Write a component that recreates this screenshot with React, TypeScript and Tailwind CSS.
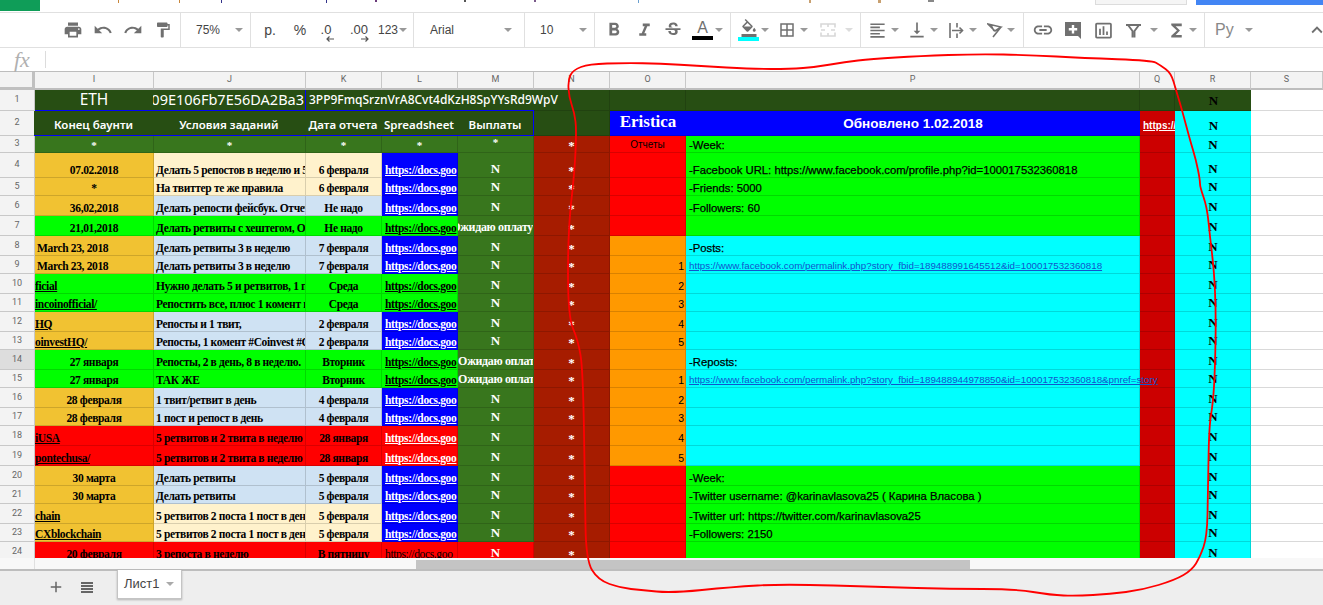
import React from "react";
import {
  MdPrint, MdUndo, MdRedo, MdFormatPaint, MdFormatBold, MdFormatItalic, MdStrikethroughS,
  MdFormatColorFill, MdBorderAll, MdFormatAlignLeft, MdVerticalAlignBottom, MdLink,
  MdInsertChartOutlined, MdFunctions, MdExpandLess, MdAdd,
} from "react-icons/md";

const Caret = ({ cls = "" }: { cls?: string }) => (
  <span className={`inline-block shrink-0 w-0 h-0 border-x-[4px] border-x-transparent border-t-[4px] border-t-[#999] ${cls}`} />
);

const Btn = ({ w, children }: { w: string; children: React.ReactNode }) => (
  <div className={`${w} h-full flex items-center justify-center shrink-0`}>{children}</div>
);

const Group = ({ w, children }: { w: string; children: React.ReactNode }) => (
  <div className={`${w} h-full flex items-center shrink-0 border-r border-[#e0e0e0]`}>{children}</div>
);

const I = ({ icon: Icon, size = 20 }: { icon: any; size?: number }) => <Icon size={size} color="#707070" />;

const ArrowL = () => (
  <svg className="absolute left-[5px] top-[13px]" width="8" height="6" viewBox="0 0 8 6" fill="none" stroke="#555" strokeWidth="1.2"><path d="M8 3H1M3.500 .5L1 3l2.500 2.500" /></svg>
);
const ArrowR = () => (
  <svg className="absolute left-[11px] top-[13px]" width="8" height="6" viewBox="0 0 8 6" fill="none" stroke="#555" strokeWidth="1.2"><path d="M0 3h7M4.500 .5L7 3 4.500 5.500" /></svg>
);

const Toolbar = () => (
  <div className="h-[36px] flex border-y border-[#e0e0e0] bg-white font-['Liberation_Sans',sans-serif] text-[12px] text-[#444] overflow-hidden">
    <div className="w-[58px] shrink-0" />
    <Group w="w-[123px]">
      <Btn w="w-[30px]"><I icon={MdPrint} /></Btn>
      <Btn w="w-[30px]"><I icon={MdUndo} /></Btn>
      <Btn w="w-[30px]"><I icon={MdRedo} /></Btn>
      <Btn w="w-[30px]"><I icon={MdFormatPaint} size={18} /></Btn>
    </Group>
    <Group w="w-[70px]">
      <span className="ml-[15px] w-[39px]">75%</span>
      <Caret />
    </Group>
    <Group w="w-[163px]">
      <Btn w="w-[38px]"><span className="text-[14px]">р.</span></Btn>
      <Btn w="w-[22px]"><span className="text-[14px]">%</span></Btn>
      <Btn w="w-[30px]">
        <span className="relative text-[13px] leading-none pb-[2px]">.0<ArrowL /></span>
      </Btn>
      <Btn w="w-[36px]">
        <span className="relative text-[13px] leading-none pb-[2px]">.00<ArrowR /></span>
      </Btn>
      <div className="flex items-center gap-[1px] ml-[1px]"><span className="text-[12px]">123</span><Caret /></div>
    </Group>
    <Group w="w-[111px]">
      <span className="ml-[16px] w-[74px] text-[12px]">Arial</span>
      <Caret />
    </Group>
    <Group w="w-[70px]">
      <span className="ml-[15px] w-[39px] text-[12px]">10</span>
      <Caret />
    </Group>
    <Group w="w-[136px]">
      <Btn w="ml-[8px] w-[22px]"><I icon={MdFormatBold} size={22} /></Btn>
      <Btn w="ml-[8px] w-[22px]"><I icon={MdFormatItalic} size={21} /></Btn>
      <Btn w="ml-[8px] w-[20px]"><I icon={MdStrikethroughS} size={20} /></Btn>
      <div className="flex items-center ml-[9px]">
        <div className="flex flex-col items-center w-[21px]">
          <span className="text-[16px] leading-[16px] text-[#707070]">A</span>
          <span className="w-[21px] h-[4px] bg-black" />
        </div>
        <Caret cls="ml-[2px]" />
      </div>
    </Group>
    <Group w="w-[130px]">
      <div className="flex items-center ml-[7px]">
        <div className="flex flex-col items-center w-[21px]">
          <MdFormatColorFill size={18} color="#707070" />
          <span className="w-[21px] h-[4px] bg-[#00ffff]" />
        </div>
        <Caret cls="ml-[2px]" />
      </div>
      <Btn w="ml-[9px] w-[18px]"><MdBorderAll size={18} color="#707070" /></Btn>
      <Caret cls="ml-[4px]" />
      <Btn w="ml-[12px] w-[16px]">
        <svg width="16" height="14" viewBox="0 0 16 14" fill="none" stroke="#d8d8d8" strokeWidth="1.600">
          <path d="M1 4.500V1h14v3.500M1 9.500V13h14V9.500M1 7h4M11 7h4M8 1v3M8 10v3" />
        </svg>
      </Btn>
      <Caret cls="ml-[9px] border-t-[#dcdcdc]" />
    </Group>
    <Group w="w-[163px]">
      <Btn w="ml-[5px] w-[22px]"><I icon={MdFormatAlignLeft} size={19} /></Btn>
      <Caret cls="ml-[3px]" />
      <Btn w="ml-[7px] w-[22px]"><I icon={MdVerticalAlignBottom} size={20} /></Btn>
      <Caret cls="ml-[2px]" />
      <Btn w="ml-[8px] w-[20px]">
        <svg width="15" height="15" viewBox="0 0 15 15" fill="none" stroke="#707070" strokeWidth="1.600">
          <path d="M1 0v15M8 0v4.500M8 10.500V15M3 7.500h10" />
          <path d="M10.500 4.500l3 3-3 3" />
        </svg>
      </Btn>
      <Caret cls="ml-[3px]" />
      <Btn w="ml-[10px] w-[16px]">
        <svg width="16" height="16" viewBox="0 0 16 16" fill="none" stroke="#707070" strokeWidth="1.600">
          <path d="M1 2l13 3-6 4zM14 5L6 15M4 3l3 6" />
        </svg>
      </Btn>
      <Caret cls="ml-[4px]" />
    </Group>
    <Group w="w-[181px]">
      <Btn w="ml-[8px] w-[22px]"><I icon={MdLink} size={22} /></Btn>
      <Btn w="ml-[11px] w-[16px]">
        <svg width="16" height="17" viewBox="0 0 16 17">
          <path fill="#707070" d="M0 0h16v17l-3-3H0z" />
          <path fill="#fff" d="M6.800 3h2.400v3h3v2.400h-3v3H6.800v-3h-3V6h3z" />
        </svg>
      </Btn>
      <Btn w="ml-[11px] w-[22px]"><I icon={MdInsertChartOutlined} size={21} /></Btn>
      <Btn w="ml-[12px] w-[15px]">
        <svg width="15" height="15" viewBox="0 0 15 15" fill="none" stroke="#707070" strokeWidth="1.900">
          <path d="M0 2h15M2 2l4.500 6v6.500M13 2L8.500 8v6.500" />
        </svg>
      </Btn>
      <Caret cls="ml-[9px]" />
      <Btn w="ml-[8px] w-[21px]"><I icon={MdFunctions} size={21} /></Btn>
      <Caret cls="ml-[2px]" />
    </Group>
    <div className="flex items-center h-full">
      <span className="ml-[10px] w-[30px] text-[16px] text-[#888]">Ру</span>
      <Caret />
      <span className="ml-[53px]"><I icon={MdExpandLess} size={22} /></span>
    </div>
  </div>
);

const TitleStrip = () => (
  <div className="h-[12px] bg-white flex items-start overflow-hidden">
    <div className="w-[40px] h-[11px] bg-[#0f9d58]" />
    <span className="ml-[78px] w-[1px] h-[3px] bg-[#c8873c]" />
    <span className="ml-[60px] w-[1px] h-[3px] bg-[#c8873c]" />
    <span className="ml-[41px] w-[1px] h-[3px] bg-[#33338a]" />
    <span className="ml-[104px] w-[1px] h-[3px] bg-[#33338a]" />
    <span className="ml-[48px] w-[2px] h-[2px] bg-[#6a3a7a]" />
    <span className="ml-[87px] w-[2px] h-[2px] bg-[#555]" />
    <span className="ml-[68px] w-[2px] h-[2px] bg-[#7a5a8a]" />
    <span className="ml-[102px] w-[1px] h-[3px] bg-[#6aa0d0]" />
    <span className="ml-[170px] w-[2px] h-[3px] bg-[#c8a070]" />
    <span className="ml-[67px] w-[3px] h-[3px] bg-[#c8a070]" />
    <span className="ml-[47px] w-[6px] h-[2px] bg-[#888]" />
    <div className="ml-[161px] w-[92px] h-[5px] bg-[#f5f5f5] border border-t-0 border-[#dcdcdc]" />
    <div className="ml-[9px] w-[128px] h-[5px] bg-[#4285f4]" />
  </div>
);

const FormulaBar = () => (
  <div className="h-[24px] bg-white flex items-center border-b border-[#bdbdbd]">
    <span className="ml-[14px] w-[31px] font-['Liberation_Serif',serif] italic text-[22px] leading-none text-[#b0b0b0]">fx</span>
    <span className="w-px h-[17px] bg-[#dcdcdc]" />
  </div>
);

const columns = ["I", "J", "K", "L", "M", "N", "O", "P", "Q", "R", "S"];

const DG = "bg-[#274e13]";
const G = "bg-[#38761d]";
const Y = "bg-[#f1c232]";
const LY = "bg-[#fff2cc]";
const LB = "bg-[#cfe2f3]";
const LIME = "bg-[#00ff00]";
const BL = "bg-[#0000ff]";
const RD = "bg-[#ff0000]";

type Row = {
  n: number;
  i: string;
  ic: string;
  mode?: "c" | "l" | "u";
  j: string;
  jc: string;
  k: string;
  kc: string;
  lc: string;
  link: string;
  m?: string;
  mAlign?: string;
  mc?: string;
};

const WK = "text-black";
const rows: Row[] = [
  { n: 4, i: "07.02.2018", ic: Y, j: "Делать 5 репостов в неделю и 5", jc: LY, k: "6 февраля", kc: LY, lc: BL, link: "text-white" },
  { n: 5, i: "*", ic: Y, j: "На твиттер те же правила", jc: LY, k: "6 февраля", kc: LY, lc: BL, link: "text-white" },
  { n: 6, i: "36,02,2018", ic: Y, j: "Делать репости фейсбук. Отчет", jc: LB, k: "Не надо", kc: LB, lc: BL, link: "text-white" },
  { n: 7, i: "21,01,2018", ic: LIME, j: "Делать ретвиты с хештегом, Отчет", jc: LIME, k: "Не надо", kc: LIME, lc: LIME, link: WK, m: "Ожидаю оплату", mAlign: "justify-end" },
  { n: 8, i: "March 23, 2018", ic: Y, mode: "l", j: "Делать ретвиты 3 в неделю", jc: LB, k: "7 февраля", kc: LB, lc: BL, link: "text-white" },
  { n: 9, i: "March 23, 2018", ic: Y, mode: "l", j: "Делать ретвиты 3 в неделю", jc: LB, k: "7 февраля", kc: LB, lc: BL, link: "text-white" },
  { n: 10, i: "ficial", ic: LIME, mode: "u", j: "Нужно делать 5  и ретвитов, 1 пост", jc: LIME, k: "Среда", kc: LIME, lc: LIME, link: WK },
  { n: 11, i: "incoinofficial/", ic: LIME, mode: "u", j: "Репостить все, плюс 1 комент и", jc: LIME, k: "Среда", kc: LIME, lc: LIME, link: WK },
  { n: 12, i: "HQ", ic: Y, mode: "u", j: "Репосты и 1 твит,", jc: LB, k: "2 февраля", kc: LB, lc: BL, link: "text-white" },
  { n: 13, i: "oinvestHQ/", ic: Y, mode: "u", j: "Репосты,  1 комент #Coinvest #C", jc: LB, k: "2 февраля", kc: LB, lc: BL, link: "text-white" },
  { n: 14, i: "27 января", ic: LIME, j: "Репосты, 2 в день, 8 в неделю.", jc: LIME, k: "Вторник", kc: LIME, lc: LIME, link: WK, m: "Ожидаю оплату", mAlign: "justify-start" },
  { n: 15, i: "27 января", ic: LIME, j: "ТАК ЖЕ", jc: LIME, k: "Вторник", kc: LIME, lc: LIME, link: WK, m: "Ожидаю оплату", mAlign: "justify-start" },
  { n: 16, i: "28 февраля", ic: Y, j: "1 твит/ретвит в день", jc: LB, k: "4 февраля", kc: LB, lc: BL, link: "text-white" },
  { n: 17, i: "28 февраля", ic: Y, j: "1 пост и репост в день", jc: LB, k: "4 февраля", kc: LB, lc: BL, link: "text-white" },
  { n: 18, i: "iUSA", ic: RD, mode: "u", j: "5 ретвитов и 2 твита в неделю", jc: RD, k: "28 января", kc: RD, lc: RD, link: "text-white" },
  { n: 19, i: "pontechusa/", ic: RD, mode: "u", j: "5 ретвитов и 2 твита в неделю", jc: RD, k: "28 января", kc: RD, lc: RD, link: "text-white" },
  { n: 20, i: "30 марта", ic: Y, j: "Делать ретвиты", jc: LB, k: "5 февраля", kc: LB, lc: BL, link: "text-white" },
  { n: 21, i: "30 марта", ic: Y, j: "Делать ретвиты", jc: LB, k: "5 февраля", kc: LB, lc: BL, link: "text-white" },
  { n: 22, i: "chain", ic: Y, mode: "u", j: "5 ретвитов 2 поста 1 пост в день", jc: LY, k: "5 февраля", kc: LY, lc: BL, link: "text-white" },
  { n: 23, i: "CXblockchain", ic: Y, mode: "u", j: "5 ретвитов 2 поста 1 пост в день", jc: LY, k: "5 февраля", kc: LY, lc: BL, link: "text-white" },
  { n: 24, i: "20 февраля", ic: RD, j: "3 репоста в неделю", jc: RD, k: "В пятницу", kc: RD, lc: RD, link: "text-black font-normal", mc: RD },
];

const pCells: Record<number, { t?: string; link?: boolean }> = {
  4: { t: "-Facebook URL: https://www.facebook.com/profile.php?id=100017532360818" },
  5: { t: "-Friends: 5000" },
  6: { t: "-Followers: 60" },
  8: { t: "-Posts:" },
  9: { t: "https://www.facebook.com/permalink.php?story_fbid=189488991645512&id=100017532360818", link: true },
  14: { t: "-Reposts:" },
  15: { t: "https://www.facebook.com/permalink.php?story_fbid=189488944978850&id=100017532360818&pnref=story", link: true },
  20: { t: "-Week:" },
  21: { t: "-Twitter username: @karinavlasova25 ( Карина Власова )" },
  22: { t: "-Twitter url: https://twitter.com/karinavlasova25" },
  23: { t: "-Followers: 2150" },
};
const oNums: Record<number, string> = { 9: "1", 10: "2", 11: "3", 12: "4", 13: "5", 15: "1", 16: "2", 17: "3", 18: "4", 19: "5" };

const line = "border-r border-b border-black/15";
const SER = "font-['Liberation_Serif',serif] font-bold text-[11.5px] tracking-[-0.35px] leading-[14px] text-black";
const SANS = "font-['Liberation_Sans',sans-serif] text-[11.3px] leading-[14px] text-black [-webkit-text-stroke:0.25px_black]";
const COMIC = "font-['Noto_Sans',sans-serif] text-white whitespace-nowrap";

const Cell = ({ className = "", children }: { className?: string; children?: React.ReactNode }) => (
  <div className={`${line} flex items-end min-w-0 overflow-hidden whitespace-nowrap ${className}`}>{children}</div>
);

const Nn = ({ dark }: { dark?: boolean }) => (
  <span className={`font-['Liberation_Serif',serif] font-bold text-[13px] leading-[15px] ${dark ? "text-black pl-[1px]" : "text-white"}`}>N</span>
);

const Star = ({ sm }: { sm?: boolean }) => (
  <span className={`font-['Liberation_Serif',serif] font-bold text-white ${sm ? "text-[11px]" : "text-[13px]"} leading-[13px]`}>*</span>
);

const RowHead = ({ n }: { n: number }) => (
  <div className={`${n === 14 ? "bg-[#dddddd]" : "bg-[#f3f3f3]"} border-r border-b border-[#c8c8c8] flex items-center justify-center font-['Roboto',sans-serif] text-[9px] text-[#666]`}>{n}</div>
);

const Sheet = () => (
  <div className="h-[486px] overflow-hidden bg-white">
    <div className="grid grid-cols-[35px_119px_152px_76px_76px_76px_76px_76px_454px_35px_76px_72px] grid-rows-[18px_21px_25px_17px_25px_18px_20px_20px_20px_18px_20px_18px_20px_18px_20px_18px_20px_18px_20px_20px_20px_18px_20px_18px_20px]">
      {/* column header */}
      <div className="bg-[#f3f3f3] border-r-[3px] border-b-[3px] border-[#c0c0c0]" />
      {columns.map((c) => (
        <div key={c} className="bg-[#f3f3f3] border-r border-b-2 border-b-[#bdbdbd] border-r-[#c8c8c8] flex items-center justify-center font-['Roboto',sans-serif] text-[9px] text-[#666]">{c}</div>
      ))}

      {/* row 1 */}
      <RowHead n={1} />
      <div className={`${DG} border-r border-b border-r-black/15 border-b-[#0000ff] flex items-center justify-center ${COMIC} text-[15.5px]`}>ETH</div>
      <div className={`${DG} border-r border-b border-[#0000ff] flex items-center justify-end overflow-hidden ${COMIC} text-[14.5px] pr-[1px] -ml-px`}>09E106Fb7E56DA2Ba3</div>
      <div className={`${DG} border-b border-[#0000ff] flex items-center pl-[3px] ${COMIC} text-[12px] font-medium z-10`}>3PP9FmqSrznVrA8Cvt4dKzH8SpYYsRd9WpV</div>
      <div className={`${DG} border-b border-[#0000ff]`} />
      <div className={`${DG} border-b border-[#0000ff]`} />
      <div className={`${DG} ${line}`} />
      <div className={`${DG} ${line}`} />
      <div className={`${DG} ${line}`} />
      <div className={`${DG} ${line}`} />
      <div className={`${DG} flex items-center justify-center border-b border-black/15`}><Nn dark /></div>
      <div className="border-b border-[#d9d9d9]" />

      {/* row 2 */}
      <RowHead n={2} />
      {["Конец баунти", "Условия заданий", "Дата отчета", "Spreadsheet", "Выплаты"].map((t) => (
        <div key={t} className={`${DG} border-r border-b border-[#0000ff] -ml-px flex items-end justify-center pb-[2px] ${COMIC} text-[11.5px] font-semibold`}>{t}</div>
      ))}
      <div className={`${DG} ${line}`} />
      <div className={`${BL} border-b border-black/15 flex items-center justify-center font-['Liberation_Serif',serif] font-bold text-white text-[17px] pb-[2px]`}>Eristica</div>
      <div className={`${BL} border-b border-black/15 flex items-end justify-center pb-[1px] font-['Liberation_Sans',sans-serif] font-bold text-white text-[13.5px]`}>Обновлено 1.02.2018</div>
      <div className="bg-[#cc0000] border-b border-black/15 flex items-end overflow-hidden pl-[3px] pb-[2px] font-['Liberation_Sans',sans-serif] font-bold text-white text-[10px] underline">https://</div>
      <div className="bg-[#00ffff] flex items-end justify-center pb-[2px] border-b border-black/15"><Nn dark /></div>
      <div className="border-b border-[#d9d9d9]" />

      {/* row 3 */}
      <RowHead n={3} />
      {["I", "J", "K", "L"].map((c) => (
        <div key={c} className={`${G} ${line} flex items-end justify-center`}><Star sm /></div>
      ))}
      <div className={`${G} ${line} flex items-end justify-center pb-[3px]`}><Star sm /></div>
      <div className={`bg-[#a61c00] ${line} flex items-end justify-center`}><Star /></div>
      <div className={`${RD} ${line} flex items-end justify-center font-['Liberation_Sans',sans-serif] text-[10px] leading-[14px] text-black`}>Отчеты</div>
      <div className={`${LIME} ${line} flex items-end pl-[3px] ${SANS}`}>-Week:</div>
      <div className={`bg-[#cc0000] ${line}`} />
      <div className={`bg-[#00ffff] ${line} flex items-center justify-center`}><Nn dark /></div>
      <div className="border-b border-[#d9d9d9]" />

      {rows.map((r) => {
        const tinted = r.n >= 8 && r.n <= 19;
        const p = pCells[r.n];
        return (
          <React.Fragment key={r.n}>
            <RowHead n={r.n} />
            <Cell className={`${r.ic} ${SER} ${r.mode === "l" ? "pl-[2px]" : r.mode === "u" ? "underline" : "justify-center"}`}>{r.i}</Cell>
            <Cell className={`${r.jc} ${SER} pl-[2px]`}>{r.j}</Cell>
            <Cell className={`${r.kc} ${SER} justify-center`}>{r.k}</Cell>
            <Cell className={`${r.lc} ${SER} pl-[3px]`}><span className={`underline ${r.link}`}>https://docs.goo</span></Cell>
            <Cell className={`${r.mc ?? G} ${r.mAlign ?? "justify-center"} pb-[1px]`}>
              {r.m ? <span className="font-['Liberation_Serif',serif] font-bold text-white text-[12px] tracking-[-0.35px] leading-[14px]">{r.m}</span> : <Nn />}
            </Cell>
            <div className={`bg-[#a61c00] ${line} flex items-end justify-center`}><Star /></div>
            <Cell className={`${tinted ? "bg-[#ff9900]" : RD} font-['Liberation_Sans',sans-serif] text-[10.5px] leading-[14px] text-black justify-end pr-[1px]`}>{oNums[r.n]}</Cell>
            <div className={`${tinted ? "bg-[#00ffff]" : LIME} ${line} flex items-end pl-[3px] whitespace-nowrap ${SANS} ${p?.link ? "z-10" : ""}`}>
              {p?.link ? <span className="underline text-[#1155cc] text-[9.75px] [-webkit-text-stroke:0]">{p.t}</span> : p?.t}
            </div>
            <div className={`bg-[#cc0000] ${line}`} />
            <div className={`bg-[#00ffff] ${line} flex items-end justify-center pb-[1px]`}><Nn dark /></div>
            <div className="border-b border-[#d9d9d9]" />
          </React.Fragment>
        );
      })}
    </div>
  </div>
);

const ScrollBar = () => (
  <div className="h-[13px] bg-[#f8f8f8] flex border-b-2 border-[#bdbdbd]">
    <div className="w-[35px] h-full border-r border-[#e0e0e0]" />
    <div className="ml-[381px] w-[554px] h-[9px] mt-[2px] bg-[#c4c4c4]" />
  </div>
);

const Tabs = () => (
  <div className="h-[34px] bg-[#eeeeee] flex items-start">
    <div className="w-[47px]" />
    <div className="h-[32px] flex items-center"><MdAdd size={18} color="#666" /></div>
    <div className="w-[16px]" />
    <div className="h-[32px] flex items-center">
      <svg width="12" height="11" viewBox="0 0 12 11" fill="#666"><path d="M0 0h12v2H0zM0 3h12v2H0zM0 6h12v2H0zM0 9h12v2H0z" /></svg>
    </div>
    <div className="w-[24px]" />
    <div className="w-[65px] h-[29px] bg-white border border-t-0 border-[#c4c4c4] shadow-[0_1px_2px_rgba(0,0,0,0.25)] -mt-px flex items-center pl-[6px] font-['Liberation_Sans',sans-serif] text-[13px] text-[#444]">
      <span className="w-[42px]">Лист1</span>
      <Caret cls="border-t-[#aaa]" />
    </div>
  </div>
);

const curve: [number, number][] = [
  [568, 80], [573, 70], [589, 64], [625, 63], [660, 63.5], [700, 66], [753, 69], [790, 69], [816, 67], [845, 62],
  [871, 59], [920, 56], [977, 54], [1030, 55], [1083, 58], [1152, 60.5], [1160, 65], [1171, 73], [1176, 90], [1182, 110],
  [1190, 140], [1196, 160], [1200, 180], [1200, 187], [1207, 207], [1210, 237], [1214, 270], [1216, 313], [1215, 370],
  [1213, 403], [1209, 427], [1208, 493], [1207, 537], [1200, 557], [1192, 570], [1175, 580], [1142, 590], [1110, 594],
  [1076, 596], [1051, 595], [1015, 589], [950, 589], [884, 587], [783, 584], [732, 587], [672, 593], [641, 590],
  [621, 588], [598, 580], [586, 560], [585, 493], [583, 370], [578, 340], [568, 317], [568, 230], [574.5, 173],
  [576.5, 130], [574.5, 113], [569, 97],
];
const curvePath = () => {
  const mid = (a: [number, number], b: [number, number]) => `${(a[0] + b[0]) / 2} ${(a[1] + b[1]) / 2}`;
  const n = curve.length;
  let d = `M${mid(curve[n - 1], curve[0])}`;
  for (let i = 0; i < n; i++) d += ` Q${curve[i][0]} ${curve[i][1]} ${mid(curve[i], curve[(i + 1) % n])}`;
  return d + "Z";
};

export default function App() {
  return (
    <div className="relative w-[1323px] h-[605px] overflow-hidden bg-white">
      <TitleStrip />
      <Toolbar />
      <FormulaBar />
      <Sheet />
      <ScrollBar />
      <Tabs />
      <svg className="absolute inset-0 z-20 pointer-events-none" width="1323" height="605" viewBox="0 0 1323 605" fill="none">
        <path d={curvePath()} stroke="#ff0000" strokeWidth="1.8" />
      </svg>
    </div>
  );
}
